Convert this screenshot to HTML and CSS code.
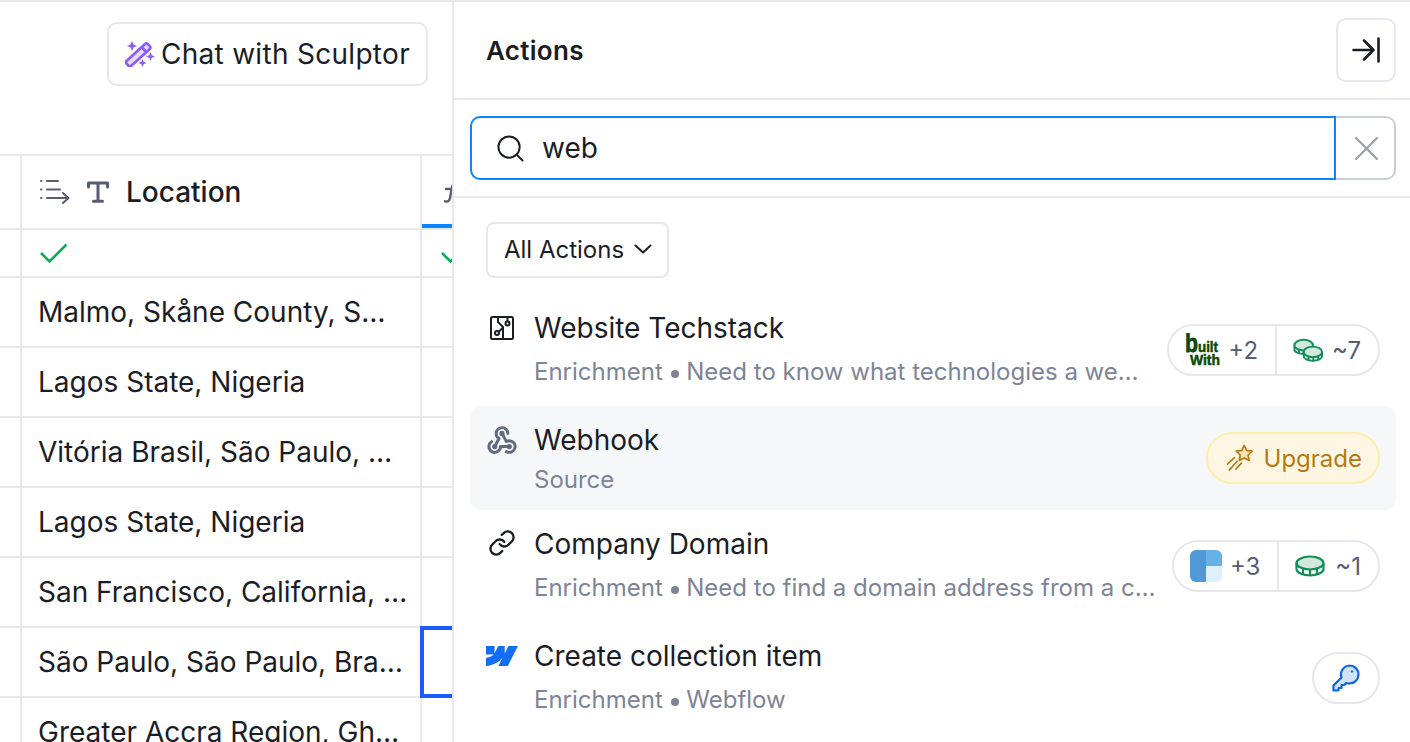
FILE: index.html
```html
<!DOCTYPE html>
<html>
<head>
  <title>Actions</title>
  <meta charset="UTF-8">
  <link rel="stylesheet" href="styles.css">
</head>
<body>
  <div id="app">
    <div id="table-side">
      <div class="toolbar">
        <button class="btn-sculptor">
          <svg class="icon-wand" viewBox="0 0 30 26" fill="none">
            <g stroke="#8b5cf6" stroke-width="2.600" stroke-linejoin="round">
              <path d="M1.500 20 20 3a2 2 0 0 1 2.800 0l2 2.200a2 2 0 0 1 0 2.800L6.300 24.800a1.800 1.800 0 0 1-2.600 0l-2.300-2.300a1.800 1.800 0 0 1 .100-2.500Z" fill="#e4dafc"/>
              <path d="M17 6.500l4.800 5"/>
            </g>
            <path d="M7 0l1.500 3.500L12 5 8.500 6.500 7 10 5.500 6.500 2 5l3.500-1.500ZM25.500 11l1.300 3.200L30 15.500l-3.200 1.300L25.500 20l-1.300-3.200-3.200-1.300 3.200-1.300ZM17.500 18l1.200 2.800 2.800 1.200-2.800 1.200L17.500 26l-1.200-2.800-2.800-1.200 2.800-1.200Z" fill="#8b5cf6"/>
          </svg>
          Chat with Sculptor
        </button>
      </div>

      <div class="table">
        <div class="row row-head">
          <div class="cell"></div>
          <div class="cell cell-main head-main">
            <svg class="icon-sort" viewBox="0 0 30 26" fill="none" stroke="#565d70" stroke-width="2" stroke-linecap="round" stroke-linejoin="round">
              <path d="M1 2h.5M1 10.500h.5M1 19h.5M7 2h11M7 10.500h13M7 19h21M23 14l5.500 5-5.500 5"/>
            </svg>
            <svg class="icon-type" viewBox="0 0 22 22" fill="none" stroke="#565d70" stroke-width="3" stroke-linecap="round" stroke-linejoin="round">
              <path d="M1.500 6V2h19v4M11 2v18M6.500 20.200h9"/>
            </svg>
            <span>Location</span>
          </div>
          <div class="cell head-active">
            <svg class="icon-fx" viewBox="0 0 30 22" fill="none" stroke="#565d70" stroke-width="2.400" stroke-linecap="round">
              <path d="M0 20c3 1.500 5.500 0 6-3L8 6c.5-3 3-4.500 6-3M2 8h10"/>
            </svg>
          </div>
        </div>
        <div class="row row-check">
          <div class="cell"></div>
          <div class="cell cell-main"><svg class="icon-check" viewBox="0 0 28 20" fill="none" stroke="#0bab5c" stroke-width="2.600"><path d="M1 10l8.500 8.500L26.500 1.500"/></svg></div>
          <div class="cell cell-main"><svg class="icon-check icon-check-next" viewBox="0 0 28 20" fill="none" stroke="#0bab5c" stroke-width="2.600"><path d="M1 10l8.500 8.500L26.500 1.500"/></svg></div>
        </div>
        <div class="row"><div class="cell"></div><div class="cell cell-main"><span class="cell-text">Malmo, Skåne County, Sweden</span></div><div class="cell"></div></div>
        <div class="row"><div class="cell"></div><div class="cell cell-main"><span class="cell-text">Lagos State, Nigeria</span></div><div class="cell"></div></div>
        <div class="row"><div class="cell"></div><div class="cell cell-main"><span class="cell-text">Vitória Brasil, São Paulo, Brazil</span></div><div class="cell"></div></div>
        <div class="row"><div class="cell"></div><div class="cell cell-main"><span class="cell-text">Lagos State, Nigeria</span></div><div class="cell"></div></div>
        <div class="row"><div class="cell"></div><div class="cell cell-main cell-wide"><span class="cell-text">San Francisco, California, United States</span></div><div class="cell"></div></div>
        <div class="row"><div class="cell"></div><div class="cell cell-main"><span class="cell-text">São Paulo, São Paulo, Brazil</span></div><div class="cell cell-selected"></div></div>
        <div class="row"><div class="cell"></div><div class="cell cell-main"><span class="cell-text">Greater Accra Region, Ghana</span></div><div class="cell"></div></div>
      </div>
    </div>

    <div id="actions-panel">
      <div class="panel-head">
        <h3>Actions</h3>
        <button class="btn-collapse">
          <svg viewBox="0 0 28 26" fill="none" stroke="#1a1d26" stroke-width="2.600" stroke-linecap="round" stroke-linejoin="round">
            <path d="M1.500 13h20M12 3.500l9.500 9.500-9.500 9.500M26.500 1.500v23"/>
          </svg>
        </button>
      </div>

      <div class="search-bar">
        <div class="search-input">
          <svg viewBox="0 0 28 28" fill="none" stroke="#1a1d26" stroke-width="2" stroke-linecap="round"><circle cx="12.500" cy="12.500" r="11"/><path d="M20.500 20.500l6 6"/></svg>
          <span>web</span>
        </div>
        <button class="search-clear">
          <svg viewBox="1 1 22 22" fill="none" stroke="#9ca3af" stroke-width="2.200" stroke-linecap="round"><path d="M2 2l20 20M22 2 2 22"/></svg>
        </button>
      </div>

      <div class="filters">
        <button class="btn-filter">
          All Actions
          <svg viewBox="0 0 18 10" fill="none" stroke="#1a1d26" stroke-width="2" stroke-linecap="round" stroke-linejoin="round"><path d="M1.500 1.500 9 8.500l7.500-7"/></svg>
        </button>
      </div>

      <div class="action-list">
        <div class="action-item">
          <svg class="action-icon icon-circuit" viewBox="0 0 24 24" fill="none" stroke="#1a1d26" stroke-width="2" stroke-linejoin="round">
            <rect x="1" y="1" width="22" height="22" rx="1.500"/>
            <path d="M8 1v5l5 5v12M17.500 1v4.500M9 15.500l4-4"/>
            <circle cx="17.500" cy="7.500" r="2"/><circle cx="7" cy="17" r="2"/>
          </svg>
          <div class="action-body">
            <div class="action-title">Website Techstack</div>
            <div class="action-sub">Enrichment <i class="dot"></i> Need to know what technologies a website is using?</div>
          </div>
          <div class="pill">
            <div class="pill-part">
              <svg class="logo-builtwith" viewBox="0 0 35 34">
                <text x="0" y="19" class="bw-big" textLength="13" lengthAdjust="spacingAndGlyphs">b</text>
                <text x="13" y="19" class="bw-small" textLength="20" lengthAdjust="spacingAndGlyphs">uilt</text>
                <text x="5" y="32" class="bw-small" textLength="30" lengthAdjust="spacingAndGlyphs">With</text>
              </svg>
              <span>+2</span>
            </div>
            <div class="pill-part">
              <svg class="icon-coins" viewBox="0 0 32 24" fill="none" stroke="#0d8f57" stroke-width="2">
                <path d="M1.500 7v4.500C1.500 14 6 16 11 16s9.500-2 9.500-4.500V7" fill="#fff"/>
                <ellipse cx="11" cy="7" rx="9.500" ry="5.500" fill="#d3e7dc"/>
                <path d="M6 12v3.500M11 13v3.500M16 12v3"/>
                <path d="M11 14v4.500c0 2.500 4 4.500 9.500 4.500s9.500-2 9.500-4.500V14" fill="#fff"/>
                <ellipse cx="20.500" cy="14" rx="9.500" ry="5.500" fill="#d3e7dc"/>
                <path d="M16 19v3.500M21 20v3.500M26 19v3"/>
              </svg>
              <span>~7</span>
            </div>
          </div>
        </div>

        <div class="action-item action-item-hover">
          <svg class="action-icon icon-webhook" viewBox="1 3 22 19" fill="none" stroke="#626a7d" stroke-width="2" stroke-linecap="round" stroke-linejoin="round">
            <path d="M4.876 13.610a4 4 0 1 0 6.124 3.390h6"/>
            <path d="M15.066 20.502a4 4 0 1 0 1.934-7.502c-.706 0-1.424.179-2 .5l-3-5.500"/>
            <path d="M16 8a4 4 0 1 0-8 0c0 1.506.77 2.818 2 3.500l-3 5.500"/>
            <g fill="#626a7d" stroke-width="1"><circle cx="12" cy="8" r="1.300"/><circle cx="7" cy="17" r="1.300"/><circle cx="17" cy="17" r="1.300"/></g>
          </svg>
          <div class="action-body">
            <div class="action-title">Webhook</div>
            <div class="action-sub action-sub-tight">Source</div>
          </div>
          <div class="pill pill-upgrade">
            <svg class="icon-star" viewBox="0 0 30 30" fill="none" stroke="#b57a10" stroke-width="1.800" stroke-linejoin="round" stroke-linecap="round">
              <path d="M19.500 1.500l2.600 5.300 5.900.9-4.300 4.100 1 5.900-5.200-2.800-5.200 2.800 1-5.900-4.300-4.100 5.900-.9Z" fill="#f3e3bd"/>
              <path d="M9 14.500 1.500 21.500M12 18.500 3.500 28M16.500 20.500 10.500 27"/>
            </svg>
            <span>Upgrade</span>
          </div>
        </div>

        <div class="action-item">
          <svg class="action-icon icon-link" viewBox="0 0 24 24" fill="none" stroke="#1a1d26" stroke-width="2" stroke-linecap="round" stroke-linejoin="round">
            <path d="M10 13a5 5 0 0 0 7.540.54l3-3a5 5 0 0 0-7.070-7.070l-1.720 1.710"/>
            <path d="M14 11a5 5 0 0 0-7.540-.54l-3 3a5 5 0 0 0 7.070 7.070l1.710-1.710"/>
          </svg>
          <div class="action-body">
            <div class="action-title">Company Domain</div>
            <div class="action-sub">Enrichment <i class="dot"></i> Need to find a domain address from a company name?</div>
          </div>
          <div class="pill">
            <div class="pill-part">
              <svg class="logo-domain" viewBox="0 0 32 32">
                <path d="M16 0H6a6 6 0 0 0-6 6v20a6 6 0 0 0 6 6h10Z" fill="#5198d6"/>
                <path d="M16 0h10a6 6 0 0 1 6 6v10H16Z" fill="#66b2e8"/>
                <path d="M16 16h16v10a6 6 0 0 1-6 6H16Z" fill="#def0fa"/>
              </svg>
              <span>+3</span>
            </div>
            <div class="pill-part">
              <svg class="icon-coin" viewBox="0 0 30 22" fill="none" stroke="#0d8f57" stroke-width="2.200">
                <path d="M1.500 8v6c0 3.500 6 6.500 13.500 6.500s13.500-3 13.500-6.500V8" fill="#fff"/>
                <ellipse cx="15" cy="8" rx="13.500" ry="6.500" fill="#d3e7dc"/>
                <path d="M8 14v5.500M15 15v5.500M22 14v5.500"/>
              </svg>
              <span>~1</span>
            </div>
          </div>
        </div>

        <div class="action-item">
          <svg class="action-icon icon-webflow" viewBox="0 4.500 24 15">
            <path d="m24 4.515-7.658 14.970H9.149l3.205-6.204h-.144C9.566 16.713 5.621 18.973 0 19.485v-6.118s3.596-.213 5.710-2.435H0V4.515h6.417v5.278l.144-.001 2.622-5.277h4.854v5.244h.144l2.720-5.244H24Z" fill="#146ef5"/>
          </svg>
          <div class="action-body">
            <div class="action-title">Create collection item</div>
            <div class="action-sub">Enrichment <i class="dot"></i> Webflow</div>
          </div>
          <div class="pill pill-key">
            <svg class="icon-key" viewBox="0 0 28 28" fill="#d3e2fb" stroke="#0b66e4" stroke-width="2.200" stroke-linejoin="round">
              <path d="M17.500 1.500a9 9 0 0 1 0 18c-1.100 0-2.200-.2-3.200-.6l-2 2.100H9.500v3H6.500v2.500H1.500v-5l8-8a9 9 0 0 1 8-12Z"/>
              <circle cx="20" cy="7.500" r=".8" fill="#0b66e4" stroke-width="1"/>
            </svg>
          </div>
        </div>
      </div>
    </div>
  </div>
</body>
</html>
```

FILE: styles.css
```css
:root {
  --border-color: #e6e7ec;
  --text-primary: #1a1d26;
  --text-secondary: #7c8496;
  --text-muted: #565d70;
  --focus-color: #0a84ff;
}

* {
  box-sizing: border-box;
}

html, body {
  height: 100%;
  margin: 0;
  overflow: hidden;
}

body {
  font-family: Inter, "Liberation Sans", sans-serif;
  font-size: 28px;
  color: var(--text-primary);
  background: #ffffff;
}

button {
  font: inherit;
  color: inherit;
  background: #ffffff;
  cursor: pointer;
}

#app {
  display: flex;
  height: 100%;
  border-top: 2px solid var(--border-color);
}

/* Table side */
#table-side {
  width: 452px;
  flex: none;
  overflow: hidden;
}

.toolbar {
  display: flex;
  justify-content: flex-end;
  height: 152px;
  padding: 20px 24px 0 0;
}

.btn-sculptor {
  display: flex;
  align-items: center;
  gap: 6px;
  height: 64px;
  padding: 0 16px;
  border: 2px solid var(--border-color);
  border-radius: 10px;
  letter-spacing: .3px;
  white-space: nowrap;
}

.icon-wand {
  width: 30px;
  height: 26px;
}

.table {
  width: 822px;
  border-top: 2px solid var(--border-color);
}

.row {
  display: grid;
  grid-template-columns: 22px 400px 400px;
  height: 70px;
}

.row-head {
  height: 74px;
}

.row-check {
  height: 48px;
}

.cell {
  position: relative;
  display: flex;
  align-items: center;
  min-width: 0;
  border-right: 2px solid var(--border-color);
  border-bottom: 2px solid var(--border-color);
}

.cell-main {
  padding-left: 16px;
  padding-right: 13px;
}

.cell-wide {
  padding-right: 12px;
}

.cell-text {
  overflow: hidden;
  white-space: nowrap;
  text-overflow: ellipsis;
}

.cell-selected::after {
  content: "";
  position: absolute;
  top: -2px;
  left: -2px;
  right: 0;
  bottom: -2px;
  border: 4px solid #1a5cff;
}

.head-main {
  padding-left: 18px;
  font-weight: 500;
}

.icon-sort {
  width: 30px;
  height: 26px;
  margin-right: 17px;
}

.icon-type {
  width: 22px;
  height: 22px;
  margin-right: 17px;
}

.head-active {
  padding-left: 22px;
  box-shadow: inset 0 -4px 0 var(--focus-color);
}

.icon-fx {
  width: 30px;
  height: 22px;
}

.icon-check {
  width: 28px;
  height: 20px;
  margin-left: 2px;
}

.icon-check-next {
  margin-left: 3px;
}

/* Actions panel */
#actions-panel {
  flex: 1;
  min-width: 0;
  border-left: 2px solid var(--border-color);
}

.panel-head {
  display: flex;
  align-items: center;
  justify-content: space-between;
  height: 98px;
  padding: 0 14px 0 32px;
  border-bottom: 2px solid var(--border-color);
}

.panel-head h3 {
  margin: 0;
  font-size: 26px;
  font-weight: 600;
  letter-spacing: .3px;
}

.btn-collapse {
  display: flex;
  align-items: center;
  justify-content: center;
  width: 60px;
  height: 64px;
  padding: 0;
  border: 2px solid var(--border-color);
  border-radius: 10px;
}

.btn-collapse svg {
  width: 28px;
  height: 26px;
}

.search-bar {
  display: flex;
  height: 98px;
  padding: 16px 14px 16px 16px;
  border-bottom: 2px solid var(--border-color);
}

.search-input {
  flex: 1;
  display: flex;
  align-items: center;
  gap: 18px;
  padding-left: 25px;
  border: 2px solid var(--focus-color);
  border-radius: 10px 0 0 10px;
}

.search-input svg {
  width: 27px;
  height: 27px;
}

.search-clear {
  display: flex;
  align-items: center;
  justify-content: center;
  width: 60px;
  padding: 0 0 0 2px;
  border: 2px solid #c9cdd6;
  border-left: none;
  border-radius: 0 10px 10px 0;
}

.search-clear svg {
  width: 23px;
  height: 23px;
}

.filters {
  padding: 24px 32px 16px;
}

.btn-filter {
  display: flex;
  align-items: center;
  gap: 10px;
  height: 56px;
  padding: 0 15px 2px 16px;
  border: 2px solid var(--border-color);
  border-radius: 8px;
  font-size: 24px;
}

.btn-filter svg {
  width: 18px;
  height: 10px;
}

.action-list {
  display: flex;
  flex-direction: column;
  padding: 0 14px 0 16px;
}

.action-item {
  display: flex;
  align-items: center;
  gap: 16px;
  padding: 14px 16px;
  border-radius: 12px;
}

.action-item-hover {
  padding-bottom: 10px;
  background: #f6f7f9;
}

.action-icon {
  flex: none;
  width: 32px;
  align-self: flex-start;
}

.icon-circuit {
  height: 24px;
  margin-top: 8px;
  padding: 0 4px;
  width: 32px;
}

.icon-webhook {
  height: 30px;
  margin-top: 5px;
}

.icon-link {
  height: 28px;
  margin-top: 5px;
}

.icon-webflow {
  height: 20px;
  margin-top: 10px;
}

.action-body {
  flex: 1;
  min-width: 0;
}

.action-title {
  line-height: 40px;
  white-space: nowrap;
}

.action-sub {
  margin-top: 4px;
  font-size: 24px;
  line-height: 40px;
  color: var(--text-secondary);
  white-space: nowrap;
  overflow: hidden;
  text-overflow: ellipsis;
}

.action-sub-tight {
  margin-top: 0;
}

.dot {
  display: inline-block;
  width: 8px;
  height: 8px;
  margin: 0 1px;
  border-radius: 50%;
  background: var(--text-secondary);
  vertical-align: 2px;
}

.pill {
  flex: none;
  display: flex;
  align-items: stretch;
  height: 52px;
  border: 2px solid var(--border-color);
  border-radius: 26px;
  background: #ffffff;
  font-size: 24px;
  color: var(--text-muted);
}

.pill-part {
  display: flex;
  align-items: center;
  gap: 8px;
  padding: 0 17px 0 16px;
}

.pill-part + .pill-part {
  border-left: 2px solid var(--border-color);
}

.logo-builtwith {
  width: 35px;
  height: 34px;
}

.bw-big {
  font-family: "Liberation Sans", sans-serif;
  font-size: 26px;
  font-weight: 700;
  fill: #0b4a08;
  stroke: #0b4a08;
  stroke-width: .8px;
}

.bw-small {
  font-family: "Liberation Sans", sans-serif;
  font-size: 14px;
  font-weight: 700;
  fill: #0b4a08;
  stroke: #0b4a08;
  stroke-width: .5px;
}

.icon-coins {
  width: 31px;
  height: 24px;
}

.icon-coin {
  width: 30px;
  height: 22px;
  margin-right: 2px;
}

.logo-domain {
  width: 32px;
  height: 32px;
}

.pill-upgrade {
  align-items: center;
  gap: 10px;
  margin-top: -4px;
  padding: 0 16px 0 18px;
  background: #fdf6e3;
  border-color: #fdeeae;
  color: #b57a10;
}

.icon-star {
  width: 28px;
  height: 28px;
}

.pill-key {
  align-items: center;
  justify-content: center;
  width: 68px;
}

.icon-key {
  width: 28px;
  height: 28px;
}
```
